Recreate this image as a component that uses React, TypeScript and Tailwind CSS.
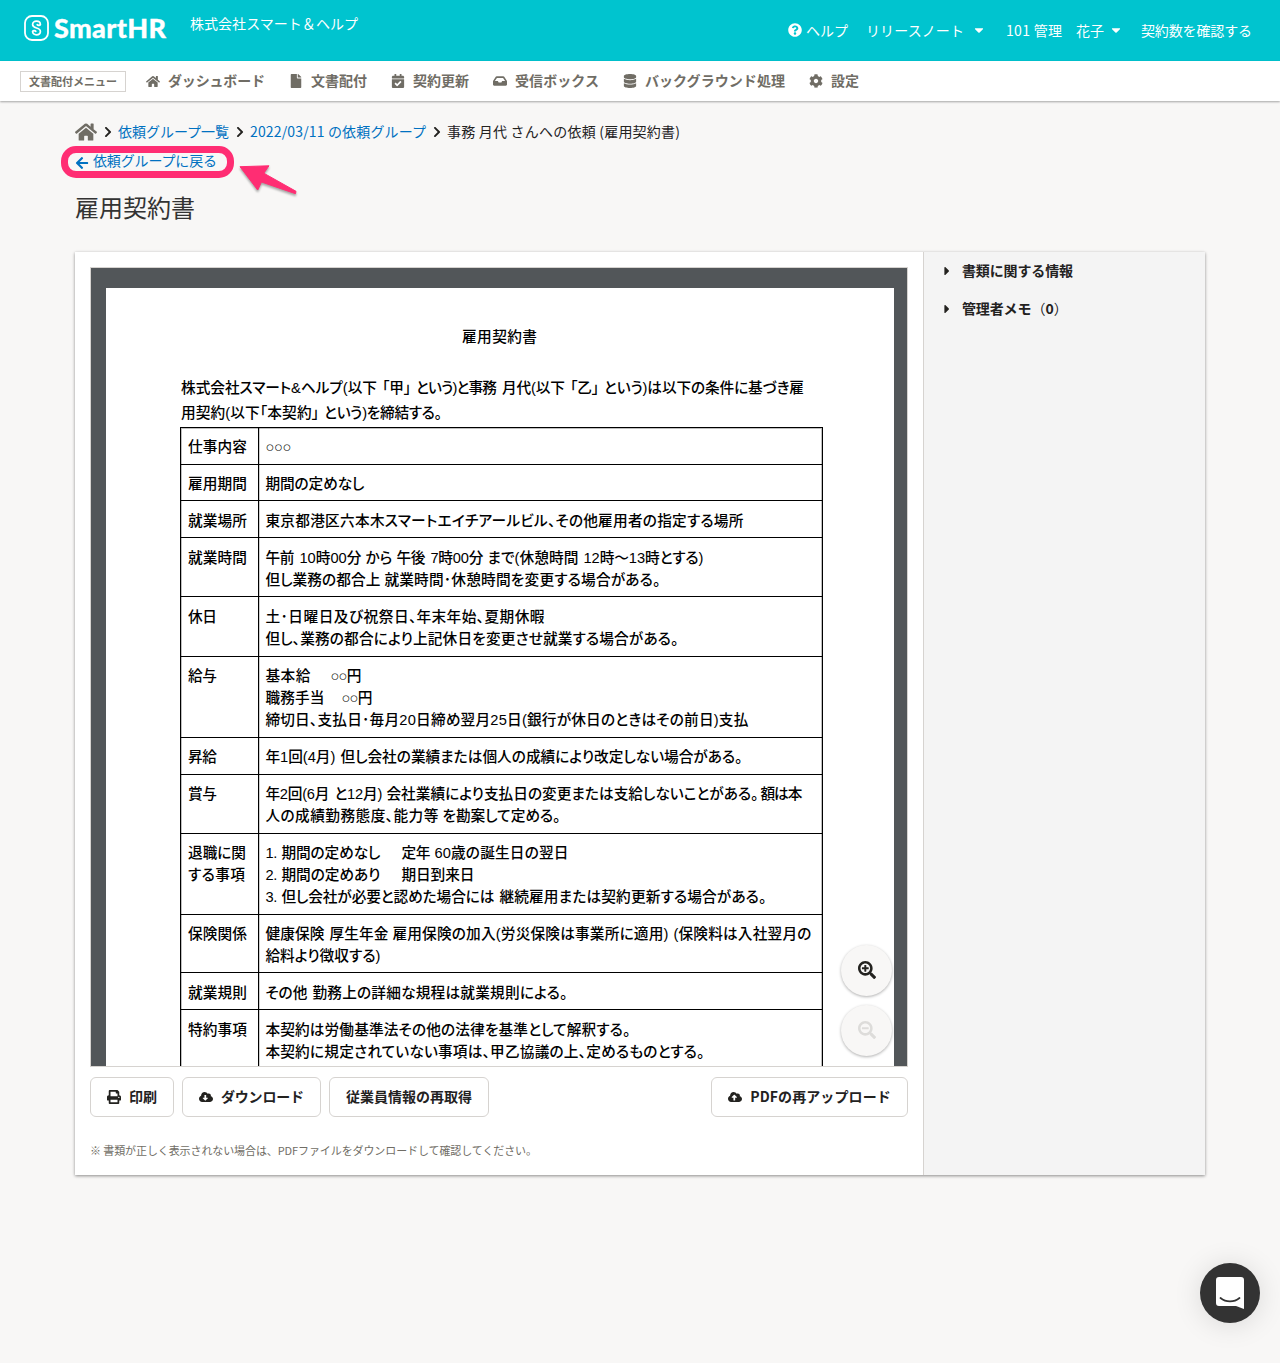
import { Fragment, useLayoutEffect, useRef } from "react";
import type { ReactNode } from "react";
import {
  FaArrowLeft, FaCalendarCheck, FaCaretDown, FaCaretRight, FaChevronRight, FaCloudDownloadAlt,
  FaCloudUploadAlt, FaCog, FaDatabase, FaFile, FaHome, FaInbox, FaPrint, FaQuestionCircle,
  FaSearchMinus, FaSearchPlus,
} from "react-icons/fa";

/** Single line of text whose tracking is adjusted so that it fills `w` pixels. */
function Fit({ w, children, className = "" }: { w: number; children: string; className?: string }) {
  const ref = useRef<HTMLSpanElement>(null);
  useLayoutEffect(() => {
    const el = ref.current;
    if (!el) return;
    el.style.letterSpacing = "0px";
    const natural = el.getBoundingClientRect().width;
    const count = Array.from(children).length;
    if (count > 1) el.style.letterSpacing = `${(w - natural) / (count - 1)}px`;
  }, [w, children]);
  return (
    <span className={`block shrink-0 ${className}`} style={{ width: w }}>
      <span ref={ref} className="inline-block whitespace-pre">{children}</span>
    </span>
  );
}

// [text, left edge, right edge], measured in page pixels
type Seg = [string, number, number];

function Line({ segs, from }: { segs: Seg[]; from: number }) {
  return (
    <div className="flex h-[22px] leading-[22px]">
      {segs.map(([text, x0, x1], i) => (
        <div key={i} className="shrink-0" style={{ marginLeft: x0 - (i ? segs[i - 1][2] : from) }}>
          <Fit w={x1 - x0}>{text}</Fit>
        </div>
      ))}
    </div>
  );
}

const rows: { h: number; low?: boolean; head: Seg[][]; body: Seg[][] }[] = [
  { h: 37, head: [[["仕事内容", 188, 247]]], body: [[["○○○", 266, 292]]] },
  { h: 36, head: [[["雇用期間", 188, 247]]], body: [[["期間の定めなし", 266, 365]]] },
  { h: 37, low: true, head: [[["就業場所", 188, 247]]], body: [[["東京都港区六本木スマートエイチアールビル、", 266, 556], ["その他雇用者の指定する場所", 556, 744]]] },
  {
    h: 59, low: true, head: [[["就業時間", 188, 247]]],
    body: [
      [["午前", 266, 295], ["10時00分", 300, 362], ["から", 366, 393], ["午後", 397, 426], ["7時00分", 431, 484], ["まで(休憩時間", 488, 579], ["12時〜13時とする)", 584, 704]],
      [["但し業務の都合上", 266, 381], ["就業時間･休憩時間を変更する場合がある。", 385, 661]],
    ],
  },
  {
    h: 60, low: true, head: [[["休日", 188, 217]]],
    body: [
      [["土･日曜日及び祝祭日、", 266, 417], ["年末年始、夏期休暇", 417, 545]],
      [["但し、業務の都合により上記休日を変更させ就業する場合がある。", 266, 679]],
    ],
  },
  {
    h: 81, head: [[["給与", 188, 217]]],
    body: [
      [["基本給", 266, 311], ["○○円", 331, 362]],
      [["職務手当", 266, 325], ["○○円", 342, 373]],
      [["締切日、支払日･毎月20日締め翌月25日(銀行が休日のときはその前日)支払", 266, 749]],
    ],
  },
  { h: 37, head: [[["昇給", 188, 217]]], body: [[["年1回(4月)", 266, 336], ["但し会社の業績または個人の成績により改定しない場合がある。", 341, 743]]] },
  {
    h: 59, head: [[["賞与", 188, 217]]],
    body: [
      [["年2回(6月", 266, 330], ["と12月)", 335, 383], ["会社業績により支払日の変更または支給しないことがある。", 387, 759], ["額は本", 761, 803]],
      [["人の成績勤務態度、能力等", 266, 439], ["を勘案して定める。", 443, 561]],
    ],
  },
  {
    h: 81, head: [[["退職に関", 188, 246]], [["する事項", 188, 245]]],
    body: [
      [["1.", 266, 278], ["期間の定めなし", 282, 381], ["定年", 402, 431], ["60歳の誕生日の翌日", 435, 569]],
      [["2.", 266, 278], ["期間の定めあり", 282, 381], ["期日到来日", 402, 475]],
      [["3.", 266, 278], ["但し会社が必要と認めた場合には", 282, 495], ["継続雇用または契約更新する場合がある。", 500, 767]],
    ],
  },
  {
    h: 58, head: [[["保険関係", 188, 247]]],
    body: [
      [["健康保険", 266, 325], ["厚生年金", 330, 389], ["雇用保険の加入(労災保険は事業所に適用)", 393, 669], ["(保険料は入社翌月の", 674, 812]],
      [["給料より徴収する)", 266, 381]],
    ],
  },
  { h: 37, low: true, head: [[["就業規則", 188, 247]]], body: [[["その他", 266, 308], ["勤務上の詳細な規程は就業規則による。", 313, 568]]] },
  {
    h: 60, low: true, head: [[["特約事項", 188, 247]]],
    body: [
      [["本契約は労働基準法その他の法律を基準として解釈する。", 266, 631]],
      [["本契約に規定されていない事項は、甲乙協議の上、定めるものとする。", 266, 705]],
    ],
  },
];

function Contract() {
  return (
    <div className="ml-[15px] mt-5 h-[900px] w-[788px] bg-white pl-[74px] pt-[38px] font-['Liberation_Sans','Noto_Sans_CJK_JP',sans-serif] text-[14.67px] font-medium text-black [font-feature-settings:'palt']">
      <Line from={180} segs={[["雇用契約書", 462, 537]]} />
      <div className="mt-[29px] flex flex-col gap-[3px]">
        <Line from={180} segs={[["株式会社スマート&ヘルプ(以下", 181, 377], ["「甲」", 382, 411], ["という)と事務", 416, 497], ["月代(以下", 502, 565], ["「乙」", 570, 599], ["という)は以下の条件に基づき雇", 604, 804]]} />
        <Line from={180} segs={[["用契約(以下「本契約」", 181, 319], ["という)を締結する。", 324, 442]]} />
      </div>
      <div className="mt-[3px] w-[643px] border-l border-r border-t border-black shadow-[inset_0_0_0_1px_#00000040]">
        {rows.map((row, i) => (
          <div key={i} className="flex border-b border-black shadow-[0_-1px_0_#00000030]" style={{ height: row.h }}>
            <div className={`w-[78px] shrink-0 border-r border-black shadow-[1px_0_0_#00000030] ${row.low ? "pt-[9px]" : "pt-2"}`}>
              {row.head.map((l, j) => <Line key={j} segs={l} from={181} />)}
            </div>
            <div className={row.low ? "pt-[9px]" : "pt-2"}>
              {row.body.map((l, j) => <Line key={j} segs={l} from={259.6} />)}
            </div>
          </div>
        ))}
      </div>
    </div>
  );
}

function NavItem({ icon, w, gap, children }: { icon: ReactNode; w: number; gap: string; children: string }) {
  return (
    <a className={`flex items-center gap-2 ${gap}`}>
      <span className="flex w-3.5 justify-center">{icon}</span>
      <Fit w={w} className="pb-0.5">{children}</Fit>
    </a>
  );
}

function Button({ icon, w, className, children }: { icon?: ReactNode; w: number; className: string; children: string }) {
  return (
    <button className={`flex h-10 items-center justify-center gap-2 rounded-md border border-[#d6d3d0] bg-white text-sm font-bold text-[#23221f] ${className}`}>
      {icon}
      <Fit w={w} className="pb-[3px] text-left">{children}</Fit>
    </button>
  );
}

export default function App() {
  const crumbs: [string, number][] = [["依頼グループ一覧", 111], ["2022/03/11 の依頼グループ", 176]];
  return (
    <div className="relative flex h-[1363px] w-[1280px] flex-col overflow-hidden bg-[#f8f7f6] font-['Noto_Sans_CJK_JP',sans-serif] text-sm leading-5 text-[#23221f]">
      <header className="flex h-[61px] shrink-0 bg-[#00c4cf] pl-6 pr-7 text-white">
        <svg className="mt-[15px] h-[26px] w-[25px]" viewBox="0 0 25 26" fill="none" stroke="white">
          <rect x="1" y="1" width="23" height="24" rx="7" strokeWidth="1.8" />
          <path d="M13.200 9.600c.8 1 2.700.9 3.200-.1C16.300 7.500 14.700 6.200 12.500 6.200c-2.300 0-3.900 1.400-3.900 3.300 0 2.200 1.700 2.900 3.900 3.500 2.300.6 3.900 1.400 3.900 3.500s-1.600 3.300-3.900 3.300-3.900-1.300-3.900-3.300c.5-1 2.400-1.100 3.200-.1" strokeWidth="1.700" strokeLinecap="round" strokeLinejoin="round" />
        </svg>
        <Fit w={112} className="ml-[5px] mt-[11px] font-['Lato',sans-serif] text-[27px] font-black leading-[34px] [-webkit-text-stroke:0.3px_white]">SmartHR</Fit>
        <Fit w={168} className="ml-6 mt-[13px]">株式会社スマート＆ヘルプ</Fit>
        <nav className="ml-auto flex items-center">
          <FaQuestionCircle className="-mt-0.5 size-3.5" />
          <Fit w={42} className="ml-1 pb-0.5">ヘルプ</Fit>
          <Fit w={98} className="ml-[18px] pb-0.5">リリースノート</Fit>
          <FaCaretDown className="-mt-0.5 ml-2 size-3.5" />
          <Fit w={56} className="ml-5 pb-0.5">101 管理</Fit>
          <Fit w={28} className="ml-3.5 pb-0.5">花子</Fit>
          <FaCaretDown className="-mt-0.5 ml-[5px] size-3.5" />
          <Fit w={111} className="ml-[18px] pb-0.5">契約数を確認する</Fit>
        </nav>
      </header>

      <nav className="flex h-10 shrink-0 items-center bg-white pl-5 font-bold text-[#706d65] shadow-[0_1px_2px_#00000055]">
        <div className="flex h-[21px] w-[106px] items-center justify-center border border-[#d6d3d0] text-[11px]">
          <Fit w={88}>文書配付メニュー</Fit>
        </div>
        <NavItem gap="ml-5" w={97} icon={<FaHome className="size-[15px]" />}>ダッシュボード</NavItem>
        <NavItem gap="ml-6" w={56} icon={<FaFile className="size-3.5" />}>文書配付</NavItem>
        <NavItem gap="ml-6" w={56} icon={<FaCalendarCheck className="size-3.5" />}>契約更新</NavItem>
        <NavItem gap="ml-6" w={84} icon={<FaInbox className="size-3.5" />}>受信ボックス</NavItem>
        <NavItem gap="ml-6" w={140} icon={<FaDatabase className="size-3.5" />}>バックグラウンド処理</NavItem>
        <NavItem gap="ml-6" w={28} icon={<FaCog className="size-3.5" />}>設定</NavItem>
      </nav>

      <main className="ml-[75px] w-[1130px]">
        <div className="mt-[21px] flex h-5 items-center">
          <FaHome className="size-[22px] text-[#706d65]" />
          {crumbs.map(([text, w]) => (
            <Fragment key={text}>
              <FaChevronRight className="ml-[5px] size-3" />
              <Fit w={w} className="ml-1 pb-0.5 text-[#0071c1]">{text}</Fit>
            </Fragment>
          ))}
          <FaChevronRight className="ml-[5px] size-3" />
          <Fit w={233} className="ml-1 pb-0.5">事務 月代 さんへの依頼 (雇用契約書)</Fit>
        </div>
        <div className="relative mt-[9px] flex h-5 items-center text-[#0071c1]">
          <FaArrowLeft className="mt-1 size-3.5" />
          <Fit w={124} className="ml-1 pb-0.5">依頼グループに戻る</Fit>
          <div className="absolute -left-3.5 -top-[5px] h-8 w-[173px] rounded-[15px] border-[7px] border-[#ff2d73]" />
          <svg className="absolute left-[163px] top-3 h-9 w-[62px] drop-shadow-[0_2px_1px_#00000055]" viewBox="238 163 62 36">
            <path d="M240 166.700 269 165.800 263.800 173.200 296 191.300 295.500 193.700 261.500 182 257.700 190Z" fill="#ff2d73" stroke="#ff2d73" strokeWidth="1" strokeLinejoin="round" />
          </svg>
        </div>
        <h1 className="mt-[18px] text-2xl font-normal leading-9 text-[#333]"><Fit w={120}>雇用契約書</Fit></h1>

        <section className="mt-[27px] flex h-[923px] bg-white shadow-[0_1px_3px_#00000070]">
          <div className="w-[848px] px-[15px] pt-[15px]">
            <div className="relative h-[800px] w-[818px] overflow-hidden border border-[#d6d3d0] bg-[#525659]">
              <Contract />
              <div className="absolute right-[15px] top-[677px] flex size-[51px] items-center justify-center rounded-full bg-[#f8f7f6] shadow-[0_1px_3px_#00000050]">
                <FaSearchPlus className="mb-0.5 ml-px size-[18px]" />
              </div>
              <div className="absolute right-[15px] top-[737px] flex size-[51px] items-center justify-center rounded-full bg-[#f8f7f6] text-[#dddcda] shadow-[0_1px_3px_#00000050]">
                <FaSearchMinus className="mb-0.5 ml-px size-[18px]" />
              </div>
            </div>
            <div className="mt-[10px] flex gap-2">
              <Button w={28} className="w-[84px]" icon={<FaPrint className="size-3.5" />}>印刷</Button>
              <Button w={83} className="w-[139px]" icon={<FaCloudDownloadAlt className="size-3.5" />}>ダウンロード</Button>
              <Button w={126} className="w-40">従業員情報の再取得</Button>
              <Button w={140.5} className="ml-auto w-[197px]" icon={<FaCloudUploadAlt className="size-3.5" />}>PDFの再アップロード</Button>
            </div>
            <p className="mt-[23px] text-[11px] text-[#706d65]"><Fit w={447}>※ 書類が正しく表示されない場合は、PDFファイルをダウンロードして確認してください。</Fit></p>
          </div>
          <aside className="flex w-[282px] flex-col gap-[18px] border-l border-[#d6d3d0] bg-[#f4f4f4] pl-4 pt-2 font-bold">
            <div className="flex items-center gap-2"><FaCaretRight className="mt-0.5 size-3.5" /><Fit w={111}>書類に関する情報</Fit></div>
            <div className="flex items-center gap-2">
              <FaCaretRight className="mt-0.5 size-3.5" />
              <div className="flex">
                <Fit w={69.5}>管理者メモ</Fit>
                <span className="font-normal">（</span><span>0</span><span className="font-normal">）</span>
              </div>
            </div>
          </aside>
        </section>
      </main>

      <button className="absolute bottom-10 right-5 flex size-[60px] items-center justify-center rounded-full bg-[#333] shadow-[0_2px_28px_#00000020]">
        <svg className="h-8 w-7" viewBox="0 0 28 32">
          <path d="M3 0h22a3 3 0 0 1 3 3v29c-3-1-5-2-8-3H3a3 3 0 0 1-3-3V3a3 3 0 0 1 3-3Z" fill="white" />
          <path d="M4.500 21c5.500 4.500 13.500 4.500 19 0" fill="none" stroke="#333" strokeWidth="1.800" strokeLinecap="round" />
        </svg>
      </button>
    </div>
  );
}
